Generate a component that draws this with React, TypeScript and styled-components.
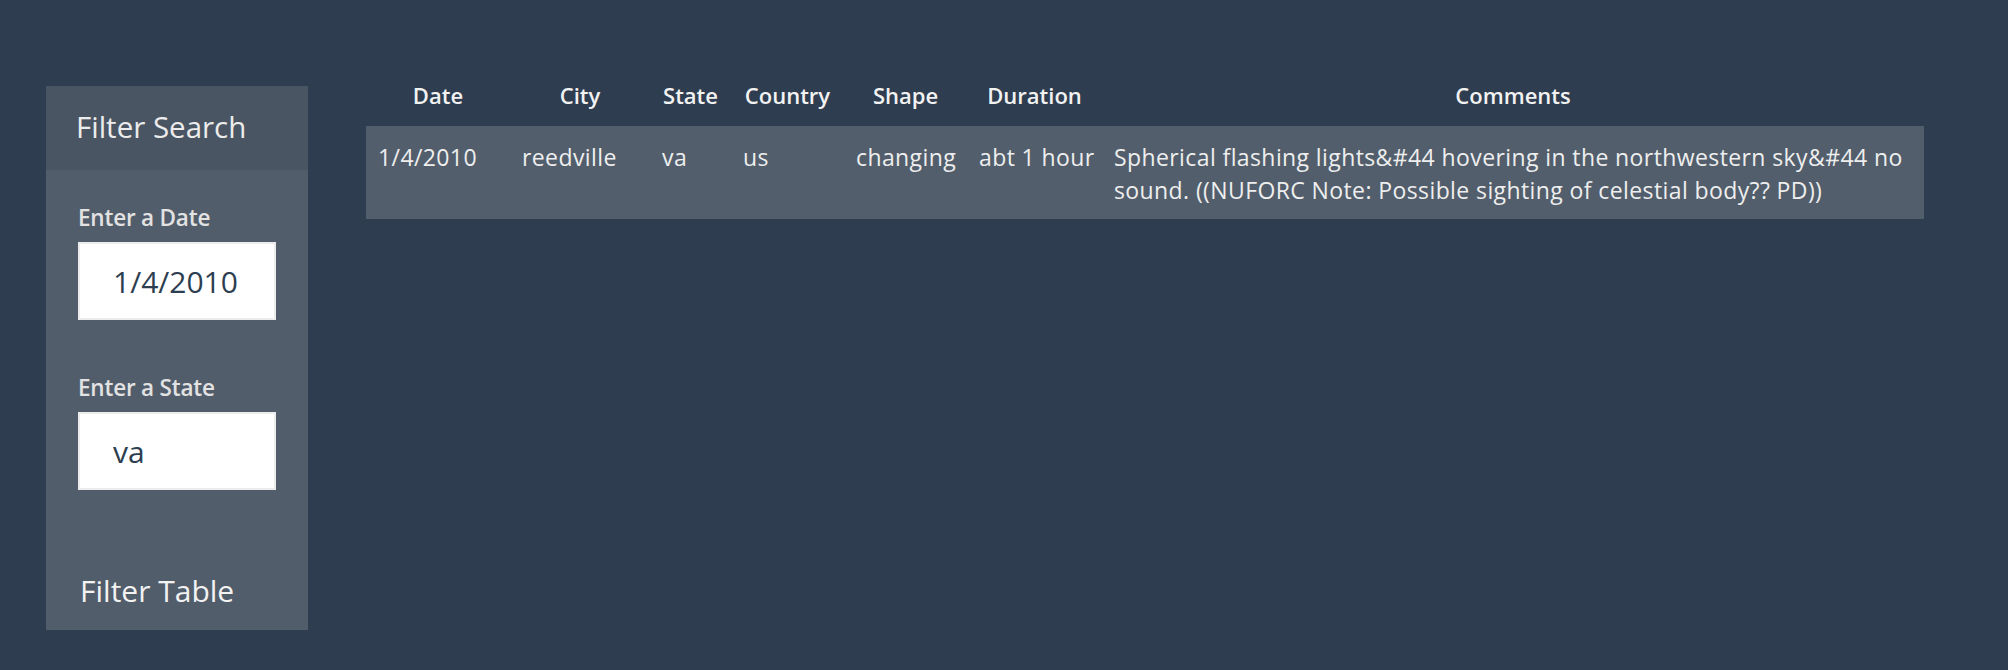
import React from 'react'
import styled, { createGlobalStyle } from 'styled-components'

const GlobalStyle = createGlobalStyle`
  html, body {
    margin: 0;
    padding: 0;
    background: #2e3d4f;
  }
  body {
    font-family: 'Open Sans', 'Noto Sans', sans-serif;
    color: #ececec;
  }
`

const Page = styled.div`
  display: flex;
  align-items: flex-start;
  gap: 58px;
  padding: 86px 0 0 46px;
  min-height: 670px;
  box-sizing: border-box;
`

const Sidebar = styled.aside`
  width: 262px;
  height: 544px;
  background: #525d6b;
  display: flex;
  flex-direction: column;
`

const SidebarHeader = styled.div`
  height: 84px;
  box-sizing: border-box;
  background: #4a5563;
  padding: 23px 0 0 30px;
  font-size: 29.5px;
  line-height: 36px;
  color: #ececec;
`

const SidebarBody = styled.div`
  flex: 1;
  display: flex;
  flex-direction: column;
  padding: 33px 0 0 32px;
`

const Field = styled.div`
  display: flex;
  flex-direction: column;
  gap: 9px;
  margin-bottom: 53px;
`

const Label = styled.label`
  font-size: 22.5px;
  line-height: 30px;
  font-weight: 600;
  color: #e2e2e2;
  letter-spacing: -0.2px;
`

const TextInput = styled.input`
  width: 198px;
  height: 78px;
  box-sizing: border-box;
  border: 2px solid #ececec;
  background: #fff;
  padding: 0 0 0 33px;
  font-family: 'Open Sans', 'Noto Sans', sans-serif;
  font-size: 30px;
  color: #2c3e50;
  outline: none;
`

const FilterButton = styled.button`
  margin-top: auto;
  margin-bottom: 21px;
  align-self: flex-start;
  background: none;
  border: none;
  padding: 0 0 0 2px;
  font-family: 'Open Sans', 'Noto Sans', sans-serif;
  font-size: 30px;
  line-height: 36px;
  color: #f2f2f2;
  cursor: pointer;
`

const Table = styled.table`
  width: 1558px;
  margin-top: -19px;
  border-collapse: collapse;
  table-layout: fixed;
  font-size: 23px;
  line-height: 33px;
  letter-spacing: 0.4px;
`

const HeadCell = styled.th`
  padding: 12px 10px 14px;
  text-align: center;
  font-weight: 600;
  font-size: 22px;
  letter-spacing: 0;
  color: #f2f2f2;
`

const Row = styled.tr`
  background: #525e6c;
`

const Cell = styled.td<{ $wrap?: boolean }>`
  padding: 15px 10px 12px 12px;
  text-align: left;
  vertical-align: top;
  white-space: ${({ $wrap }) => ($wrap ? 'normal' : 'nowrap')};
  color: #eeeeee;
`

const columns = [
  { key: 'datetime', label: 'Date', width: 144 },
  { key: 'city', label: 'City', width: 140 },
  { key: 'state', label: 'State', width: 81 },
  { key: 'country', label: 'Country', width: 113 },
  { key: 'shape', label: 'Shape', width: 123 },
  { key: 'durationMinutes', label: 'Duration', width: 135 },
  { key: 'comments', label: 'Comments', width: 822 },
]

const sightings: Record<string, string>[] = [
  {
    datetime: '1/4/2010',
    city: 'reedville',
    state: 'va',
    country: 'us',
    shape: 'changing',
    durationMinutes: 'abt 1 hour',
    comments:
      'Spherical flashing lights&#44 hovering in the northwestern sky&#44 no sound. ((NUFORC Note: Possible sighting of celestial body?? PD))',
  },
]

export default function App() {
  return (
    <>
      <GlobalStyle />
      <Page>
        <Sidebar>
          <SidebarHeader>Filter Search</SidebarHeader>
          <SidebarBody>
            <Field>
              <Label htmlFor="datetime">Enter a Date</Label>
              <TextInput id="datetime" type="text" defaultValue="1/4/2010" />
            </Field>
            <Field>
              <Label htmlFor="state">Enter a State</Label>
              <TextInput id="state" type="text" defaultValue="va" />
            </Field>
            <FilterButton>Filter Table</FilterButton>
          </SidebarBody>
        </Sidebar>
        <Table>
          <colgroup>
            {columns.map((c) => (
              <col key={c.key} style={{ width: c.width }} />
            ))}
          </colgroup>
          <thead>
            <tr>
              {columns.map((c) => (
                <HeadCell key={c.key}>{c.label}</HeadCell>
              ))}
            </tr>
          </thead>
          <tbody>
            {sightings.map((s, i) => (
              <Row key={i}>
                {columns.map((c) => (
                  <Cell key={c.key} $wrap={c.key === 'comments'}>
                    {s[c.key]}
                  </Cell>
                ))}
              </Row>
            ))}
          </tbody>
        </Table>
      </Page>
    </>
  )
}
